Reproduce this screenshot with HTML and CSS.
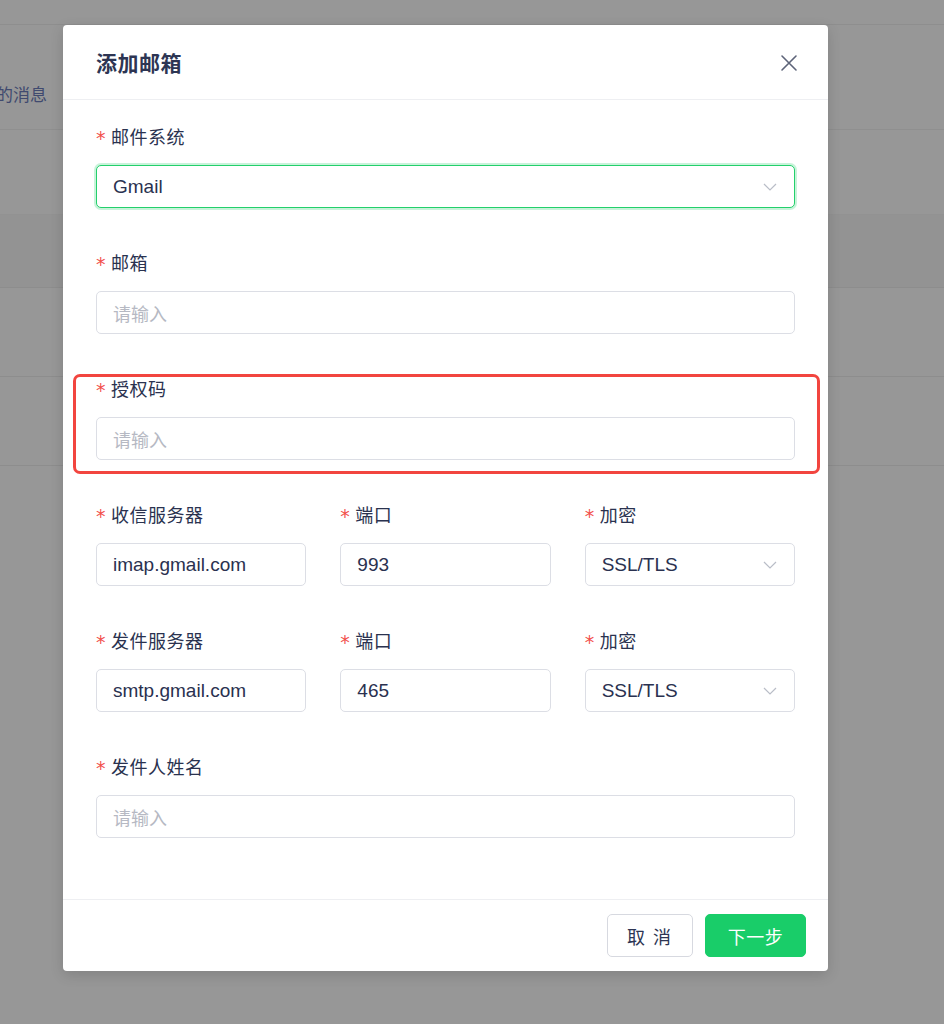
FILE: index.html
```html
<!DOCTYPE html>
<html lang="zh">
<head>
<meta charset="utf-8">
<title>添加邮箱</title>
<link rel="stylesheet" href="styles.css">
</head>
<body>
<div class="page">
  <div class="topbar"></div>
  <div class="tabs"><span class="tab-text">的消息</span></div>
  <div class="spacer"></div>
  <div class="thead"></div>
  <div class="trow"></div>
  <div class="trow"></div>
</div>

<div class="modal">
  <div class="modal-header">
    <span class="modal-title">添加邮箱</span>
    <svg class="close" width="18" height="18" viewBox="0 0 18 18"><path d="M2 2 L16 16 M16 2 L2 16" stroke="#5d6479" stroke-width="1.6" fill="none" stroke-linecap="round"/></svg>
  </div>
  <div class="modal-body">
    <div class="item">
      <div class="label"><span class="star">*</span>邮件系统</div>
      <div class="input select focus"><span class="value">Gmail</span><svg class="chev" width="14" height="8" viewBox="0 0 14 8"><path d="M1 1 L7 7 L13 1" stroke="#b9bdc7" stroke-width="1.2" fill="none"/></svg></div>
    </div>
    <div class="item">
      <div class="label"><span class="star">*</span>邮箱</div>
      <div class="input"><span class="ph">请输入</span></div>
    </div>
    <div class="item">
      <div class="label"><span class="star">*</span>授权码</div>
      <div class="input"><span class="ph">请输入</span></div>
    </div>
    <div class="item-row">
      <div class="cell">
        <div class="label"><span class="star">*</span>收信服务器</div>
        <div class="input"><span class="value">imap.gmail.com</span></div>
      </div>
      <div class="cell">
        <div class="label"><span class="star">*</span>端口</div>
        <div class="input"><span class="value">993</span></div>
      </div>
      <div class="cell">
        <div class="label"><span class="star">*</span>加密</div>
        <div class="input select"><span class="value">SSL/TLS</span><svg class="chev" width="14" height="8" viewBox="0 0 14 8"><path d="M1 1 L7 7 L13 1" stroke="#b9bdc7" stroke-width="1.2" fill="none"/></svg></div>
      </div>
    </div>
    <div class="item-row">
      <div class="cell">
        <div class="label"><span class="star">*</span>发件服务器</div>
        <div class="input"><span class="value">smtp.gmail.com</span></div>
      </div>
      <div class="cell">
        <div class="label"><span class="star">*</span>端口</div>
        <div class="input"><span class="value">465</span></div>
      </div>
      <div class="cell">
        <div class="label"><span class="star">*</span>加密</div>
        <div class="input select"><span class="value">SSL/TLS</span><svg class="chev" width="14" height="8" viewBox="0 0 14 8"><path d="M1 1 L7 7 L13 1" stroke="#b9bdc7" stroke-width="1.2" fill="none"/></svg></div>
      </div>
    </div>
    <div class="item">
      <div class="label"><span class="star">*</span>发件人姓名</div>
      <div class="input"><span class="ph">请输入</span></div>
    </div>
  </div>
  <div class="modal-footer">
    <button class="btn btn-default">取 消</button>
    <button class="btn btn-primary">下一步</button>
  </div>
  <div class="highlight"></div>
</div>
</body>
</html>
```

FILE: styles.css
```css
* { box-sizing: border-box; }

html, body {
  margin: 0;
  padding: 0;
}

body {
  width: 944px;
  height: 1024px;
  overflow: hidden;
  background: #979797;
  font-family: "Liberation Sans", "Noto Sans CJK SC", sans-serif;
  position: relative;
}

/* background page under the mask */
.page {
  display: flex;
  flex-direction: column;
}

.topbar {
  height: 25px;
  border-bottom: 1px solid #8e8e8e;
}

.tabs {
  height: 105px;
  border-bottom: 1px solid #8f8f8f;
  padding-top: 58px;
  overflow: hidden;
}

.tab-text {
  display: block;
  margin-left: -4px;
  font-size: 17px;
  line-height: 22px;
  color: #404a6f;
  font-family: "Noto Sans CJK SC", sans-serif;
}

.spacer {
  height: 85px;
  border-bottom: 1px solid #929292;
}

.thead {
  height: 73px;
  background: #939393;
  border-bottom: 1px solid #8d8d8d;
}

.trow {
  height: 89px;
  border-bottom: 1px solid #8d8d8d;
}

/* modal */
.modal {
  position: absolute;
  left: 63px;
  top: 25px;
  width: 765px;
  height: 946px;
  background: #ffffff;
  border-radius: 4px;
  box-shadow: 0 4px 14px rgba(0, 0, 0, 0.14);
  display: flex;
  flex-direction: column;
}

.modal-header {
  height: 75px;
  border-bottom: 1px solid #eeeff2;
  display: flex;
  align-items: center;
  justify-content: space-between;
  padding: 0 30px 0 33px;
}

.modal-title {
  font-family: "Noto Sans CJK SC", sans-serif;
  font-size: 21px;
  font-weight: 700;
  color: #2d3553;
  letter-spacing: 0.5px;
}

.close {
  display: block;
  margin-top: 1px;
}

.modal-body {
  flex: 1;
  padding: 25px 33px 0 33px;
}

.item,
.cell {
  display: flex;
  flex-direction: column;
}

.item,
.item-row {
  margin-bottom: 43px;
}

.item-row {
  display: grid;
  grid-template-columns: 1fr 1fr 1fr;
  column-gap: 34px;
}

.label {
  font-family: "Noto Sans CJK SC", sans-serif;
  font-size: 18px;
  line-height: 22px;
  height: 22px;
  color: #2a324f;
  margin-bottom: 18px;
  display: flex;
  align-items: center;
  letter-spacing: 0.5px;
}

.star {
  color: #f2504b;
  font-family: "DejaVu Sans", sans-serif;
  font-size: 19px;
  width: 15px;
  line-height: 22px;
  padding-top: 4px;
}

.input {
  height: 43px;
  border: 1px solid #dcdee5;
  border-radius: 5px;
  display: flex;
  align-items: center;
  padding: 0 17px 0 16px;
  font-size: 19px;
  color: #2f3654;
  background: #fff;
}

.input.focus {
  border: 1.5px solid #23d06b;
  box-shadow: 0 0 0 2px rgba(35, 208, 107, 0.25);
}

.select {
  justify-content: space-between;
}

.value {
  font-family: "Liberation Sans", "Noto Sans CJK SC", sans-serif;
  font-size: 19px;
  color: #2a3150;
}

.ph {
  font-family: "Noto Sans CJK SC", sans-serif;
  font-size: 18px;
  color: #b6b9c3;
}

.chev {
  display: block;
}

.modal-footer {
  height: 72px;
  border-top: 1px solid #eeeff2;
  display: flex;
  justify-content: flex-end;
  align-items: flex-start;
  padding: 14px 22px 0 0;
  gap: 12px;
}

.btn {
  height: 43px;
  border-radius: 5px;
  font-family: "Noto Sans CJK SC", sans-serif;
  font-size: 18px;
  cursor: pointer;
  padding: 0;
}

.btn-default {
  width: 86px;
  background: #fff;
  border: 1px solid #d7d9e0;
  color: #2d3553;
  letter-spacing: 2px;
}

.btn-primary {
  width: 101px;
  background: #19cd69;
  border: 1px solid #19cd69;
  color: #ffffff;
  letter-spacing: 0.5px;
}

/* annotation frame over the 授权码 field */
.highlight {
  position: absolute;
  left: 10px;
  top: 349px;
  width: 747px;
  height: 100px;
  border: 3.5px solid #f2453f;
  border-radius: 7px;
  pointer-events: none;
}
```
